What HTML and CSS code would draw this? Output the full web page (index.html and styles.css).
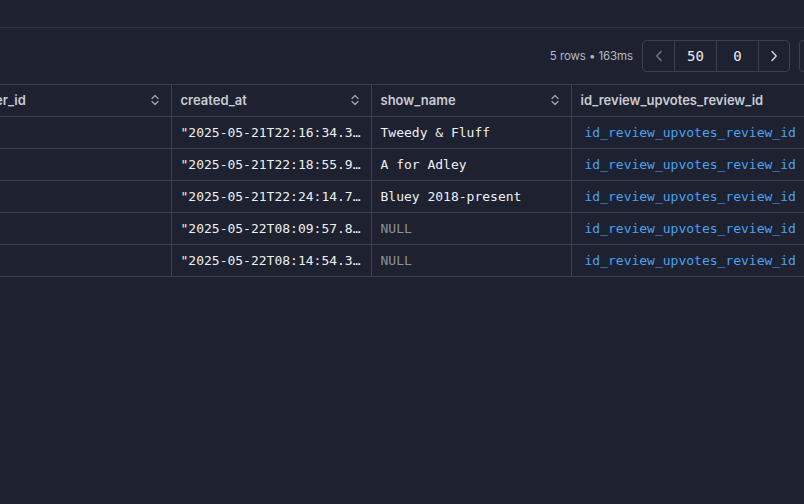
FILE: index.html
```html
<!DOCTYPE html>
<html>
<head>
<meta charset="utf-8">
<link rel="stylesheet" href="styles.css">
</head>
<body>
<div class="page">
  <div class="topbar"></div>
  <div class="toolbar">
    <span class="status">5 rows • 163ms</span>
    <div class="pager">
      <button class="pbtn nav disabled" aria-label="Previous">
        <svg width="8" height="12" viewBox="0 0 8 12"><path d="M6 1.5 L1.8 6 L6 10.5" fill="none" stroke="currentColor" stroke-width="1.4" stroke-linecap="round" stroke-linejoin="round"/></svg>
      </button>
      <span class="pbtn num limit">50</span>
      <span class="pbtn num offset">0</span>
      <button class="pbtn nav" aria-label="Next">
        <svg width="8" height="12" viewBox="0 0 8 12"><path d="M2 1.5 L6.2 6 L2 10.5" fill="none" stroke="currentColor" stroke-width="1.4" stroke-linecap="round" stroke-linejoin="round"/></svg>
      </button>
    </div>
    <button class="extra"></button>
  </div>
  <div class="tablewrap">
    <table class="grid">
      <thead>
        <tr>
          <th><div class="hcell"><span>user_id</span><svg class="sort" width="8" height="12" viewBox="0 0 8 12"><path d="M1 4.5 L4 1.5 L7 4.5 M1 7.5 L4 10.5 L7 7.5" fill="none" stroke="currentColor" stroke-width="1.2" stroke-linecap="round" stroke-linejoin="round"/></svg></div></th>
          <th><div class="hcell"><span>created_at</span><svg class="sort" width="8" height="12" viewBox="0 0 8 12"><path d="M1 4.5 L4 1.5 L7 4.5 M1 7.5 L4 10.5 L7 7.5" fill="none" stroke="currentColor" stroke-width="1.2" stroke-linecap="round" stroke-linejoin="round"/></svg></div></th>
          <th><div class="hcell"><span>show_name</span><svg class="sort" width="8" height="12" viewBox="0 0 8 12"><path d="M1 4.5 L4 1.5 L7 4.5 M1 7.5 L4 10.5 L7 7.5" fill="none" stroke="currentColor" stroke-width="1.2" stroke-linecap="round" stroke-linejoin="round"/></svg></div></th>
          <th class="wide"><div class="hcell"><span>id_review_upvotes_review_id</span></div></th>
        </tr>
      </thead>
      <tbody>
        <tr><td></td><td>"2025-05-21T22:16:34.371Z"</td><td>Tweedy &amp; Fluff</td><td class="wide"><a class="link">id_review_upvotes_review_id</a></td></tr>
        <tr><td></td><td>"2025-05-21T22:18:55.912Z"</td><td>A for Adley</td><td class="wide"><a class="link">id_review_upvotes_review_id</a></td></tr>
        <tr><td></td><td>"2025-05-21T22:24:14.745Z"</td><td>Bluey 2018-present</td><td class="wide"><a class="link">id_review_upvotes_review_id</a></td></tr>
        <tr><td></td><td>"2025-05-22T08:09:57.812Z"</td><td class="null">NULL</td><td class="wide"><a class="link">id_review_upvotes_review_id</a></td></tr>
        <tr><td></td><td>"2025-05-22T08:14:54.301Z"</td><td class="null">NULL</td><td class="wide"><a class="link">id_review_upvotes_review_id</a></td></tr>
      </tbody>
    </table>
  </div>
</div>
</body>
</html>
```
FILE: styles.css
```css
html, body {
  margin: 0;
  padding: 0;
  background: #1d2130;
  overflow: hidden;
}
.page {
  width: 804px;
  height: 504px;
  overflow: hidden;
  font-family: Inter, "Noto Sans", sans-serif;
  color: #d4d7de;
}
.topbar {
  height: 27px;
  border-bottom: 1px solid #333848;
}
.toolbar {
  height: 56px;
  display: flex;
  align-items: center;
  justify-content: flex-end;
  gap: 9px;
  margin-right: -27px;
}
.status {
  font-size: 11.5px;
  letter-spacing: -0.1px;
  color: #b4b8c2;
}
.pager {
  display: flex;
  height: 32px;
  box-sizing: border-box;
  border: 1px solid #3b4050;
  border-radius: 4px;
}
.pbtn {
  display: flex;
  align-items: center;
  justify-content: center;
  box-sizing: border-box;
  height: 30px;
  background: transparent;
  border: none;
  padding: 0;
  color: #d6d9e0;
}
.pbtn + .pbtn {
  border-left: 1px solid #3b4050;
}
.nav { width: 31px; }
.nav.disabled { color: #777c8a; }
.num {
  font-family: "DejaVu Sans Mono", monospace;
  font-size: 14px;
  color: #eceef2;
}
.limit { width: 42px; }
.offset { width: 42px; }
.extra {
  width: 32px;
  height: 32px;
  box-sizing: border-box;
  border: 1px solid #3b4050;
  border-radius: 4px;
  background: transparent;
}
.tablewrap {
  margin-left: -29px;
  border-top: 1px solid #3b4050;
}
.grid {
  border-collapse: collapse;
  table-layout: fixed;
  width: 850px;
}
.grid th, .grid td {
  width: 200px;
  box-sizing: border-box;
  height: 32px;
  padding: 0 9px;
  border-right: 1px solid #3b4050;
  border-bottom: 1px solid #3b4050;
  white-space: nowrap;
  overflow: hidden;
  text-overflow: ellipsis;
}
.grid th { height: 31px; }
.grid th.wide, .grid td.wide { width: 250px; border-right: none; }
.grid th {
  text-align: left;
  font-weight: 600;
  font-size: 13px;
  color: #c9ccd4;
}
.hcell {
  display: flex;
  align-items: center;
  justify-content: space-between;
}
.sort {
  color: #a4a8b2;
  margin-right: 3px;
}
.grid td {
  font-family: "DejaVu Sans Mono", monospace;
  font-size: 13px;
  color: #eef0f3;
}
.grid td.null { color: #8c919c; }
.link {
  color: #4ea1ee;
  padding-left: 4px;
}
```
